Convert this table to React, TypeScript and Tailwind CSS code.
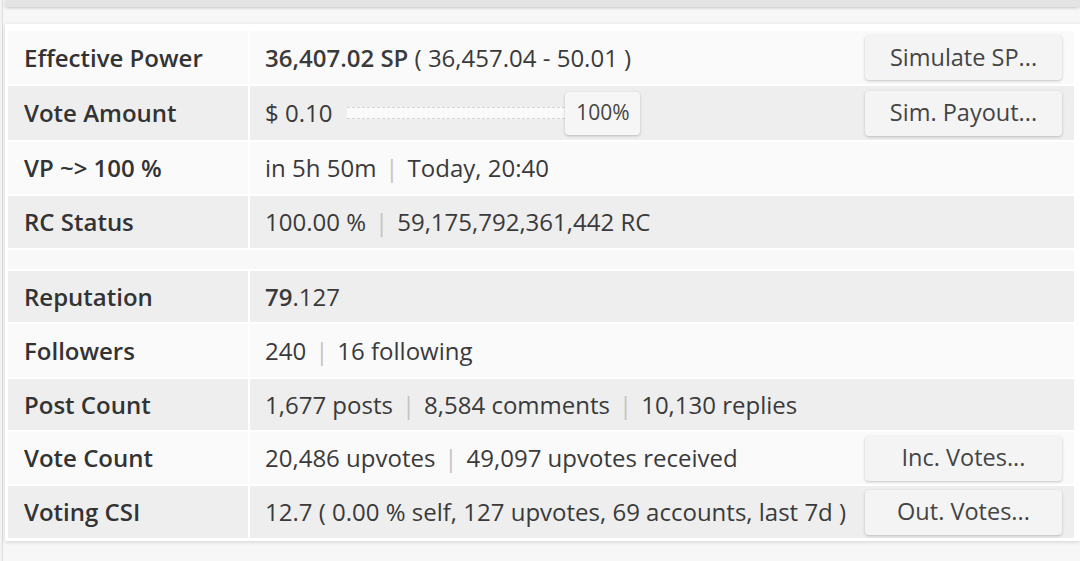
import React from "react";

const font = { fontFamily: '"Open Sans", "Noto Sans", sans-serif' };

function Sep() {
  return <span className="mx-[9px] text-[#c4c4c4]">|</span>;
}

function Btn({ children }: { children: React.ReactNode }) {
  return (
    <button className="h-[45px] w-[197px] rounded-[4px] bg-[#f4f4f4] text-[23.5px] text-[#444] shadow-[0_1px_3px_rgba(0,0,0,0.22)]">
      {children}
    </button>
  );
}

type Row = {
  label: string;
  value: React.ReactNode;
  btn?: string;
  grey: boolean;
  h: string;
};

export default function App() {
  const rowsA: Row[] = [
    {
      label: "Effective Power",
      value: (
        <>
          <span className="font-semibold">36,407.02 SP</span> ( 36,457.04 - 50.01 )
        </>
      ),
      btn: "Simulate SP...",
      grey: false,
      h: "h-[53px]",
    },
    {
      label: "Vote Amount",
      value: (
        <div className="flex items-center">
          <span>$ 0.10</span>
          <div className="ml-[15px] flex items-center">
            <div className="h-[12px] w-[218px] border-y border-dashed border-[#d4d4d4] bg-[#fafafa]" />
            <div className="flex h-[43px] w-[75px] items-center justify-center rounded-[4px] bg-[#f6f6f6] text-[21px] text-[#444] shadow-[0_1px_3px_rgba(0,0,0,0.22)]">
              100%
            </div>
          </div>
        </div>
      ),
      btn: "Sim. Payout...",
      grey: true,
      h: "h-[54px]",
    },
    {
      label: "VP ~> 100 %",
      value: (
        <>
          in 5h 50m<Sep />Today, 20:40
        </>
      ),
      grey: false,
      h: "h-[52px]",
    },
    {
      label: "RC Status",
      value: (
        <>
          100.00 %<Sep />59,175,792,361,442 RC
        </>
      ),
      grey: true,
      h: "h-[52px]",
    },
  ];

  const rowsB: Row[] = [
    {
      label: "Reputation",
      value: (
        <>
          <span className="font-semibold">79</span>.127
        </>
      ),
      grey: true,
      h: "h-[51px]",
    },
    {
      label: "Followers",
      value: (
        <>
          240<Sep />16 following
        </>
      ),
      grey: false,
      h: "h-[53px]",
    },
    {
      label: "Post Count",
      value: (
        <>
          1,677 posts<Sep />8,584 comments<Sep />10,130 replies
        </>
      ),
      grey: true,
      h: "h-[51px]",
    },
    {
      label: "Vote Count",
      value: (
        <>
          20,486 upvotes<Sep />49,097 upvotes received
        </>
      ),
      btn: "Inc. Votes...",
      grey: false,
      h: "h-[52px]",
    },
    {
      label: "Voting CSI",
      value: <>12.7 ( 0.00 % self, 127 upvotes, 69 accounts, last 7d )</>,
      btn: "Out. Votes...",
      grey: true,
      h: "h-[52px]",
    },
  ];

  const renderRow = (r: Row) => (
    <tr key={r.label}>
      <td
        className={`${r.h} w-[240px] p-0 pl-[16px] align-middle text-[24px] font-semibold text-[#333] ${
          r.grey ? "bg-[#eeeeee]" : "bg-[#fafafa]"
        }`}
      >
        {r.label}
      </td>
      <td
        className={`${r.h} p-0 pl-[15px] pr-[12px] align-middle text-[24px] text-[#3a3a3a] ${
          r.grey ? "bg-[#eeeeee]" : "bg-[#fafafa]"
        }`}
      >
        <div className="flex items-center justify-between">
          <div className="whitespace-nowrap">{r.value}</div>
          {r.btn && <Btn>{r.btn}</Btn>}
        </div>
      </td>
    </tr>
  );

  return (
    <div
      className="h-[561px] w-[1080px] overflow-hidden bg-[#f3f3f3]"
      style={font}
    >
      <div className="ml-[2px] h-full border-l border-[#dcdcdc] bg-[#f7f7f7]">
        <div className="ml-[2px] h-[7px] rounded-b-[3px] bg-[#e4e4e4] shadow-[0_1px_3px_rgba(0,0,0,0.2)]" />
        <div className="h-[17px]" />
        <div className="ml-[2px] bg-white pb-[3px] pl-[3px] pt-[7px] pr-[2px] shadow-[0_1px_4px_rgba(0,0,0,0.15)]">
          <table className="w-full border-separate border-spacing-[2px] -m-[2px]">
            <tbody>
              {rowsA.map(renderRow)}
              <tr>
                <td colSpan={2} className="h-[19px] p-0 bg-[#f8f8f8]" />
              </tr>
              {rowsB.map(renderRow)}
            </tbody>
          </table>
        </div>
      </div>
    </div>
  );
}
